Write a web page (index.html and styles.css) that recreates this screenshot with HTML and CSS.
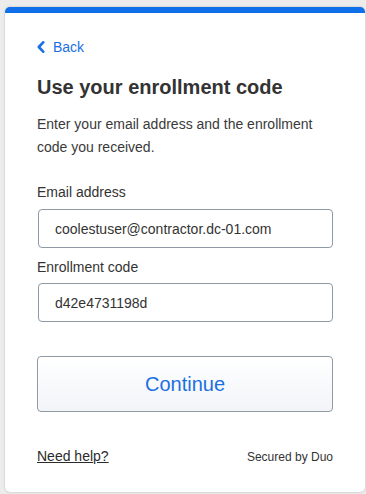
FILE: index.html
```html
<!DOCTYPE html>
<html lang="en">
<head>
<meta charset="utf-8">
<title>Use your enrollment code</title>
<link rel="stylesheet" href="styles.css">
</head>
<body>
<main class="card">
  <a class="back" href="#">
    <svg class="chev" width="8" height="12" viewBox="0 0 8 12" aria-hidden="true"><polyline points="6.2,1.3 1.8,6 6.2,10.7" fill="none" stroke="currentColor" stroke-width="2.6" stroke-linecap="round" stroke-linejoin="round"/></svg>
    <span>Back</span>
  </a>
  <h1 class="title">Use your enrollment code</h1>
  <p class="desc">Enter your email address and the enrollment code you received.</p>
  <label class="label label-first">Email address</label>
  <div class="input">coolestuser@contractor.dc-01.com</div>
  <label class="label label-second">Enrollment code</label>
  <div class="input">d42e4731198d</div>
  <button class="continue" type="button">Continue</button>
  <footer class="foot">
    <a class="help" href="#">Need help?</a>
    <span class="secured">Secured by Duo</span>
  </footer>
</main>
</body>
</html>
```
FILE: styles.css
```css
html, body {
  margin: 0;
  padding: 0;
}
body {
  background: #ececec;
  font-family: "Liberation Sans", Arial, sans-serif;
  color: #333;
  height: 494px;
  overflow: hidden;
}
.card {
  box-sizing: border-box;
  width: 360px;
  height: 485px;
  margin: 7px 0 0 5px;
  background: #fff;
  border-top: 6px solid #0f6fe8;
  border-radius: 5px;
  box-shadow: 0 0 2px rgba(0, 0, 0, 0.28);
  padding: 26px 32px 28px;
  display: flex;
  flex-direction: column;
}
.back {
  display: flex;
  align-items: center;
  gap: 8px;
  height: 16px;
  font-size: 14px;
  line-height: 16px;
  color: #1a6fe3;
  text-decoration: none;
  align-self: flex-start;
}
.chev {
  display: block;
  margin-top: -1px;
}
.title {
  margin: 20px 0 0;
  font-size: 20px;
  line-height: 24px;
  font-weight: bold;
  color: #333;
}
.desc {
  margin: 14px 0 0;
  font-size: 14px;
  line-height: 23px;
  color: #3a3a3a;
}
.label {
  display: block;
  font-size: 14px;
  line-height: 16px;
  color: #333;
}
.label-first {
  margin-top: 25px;
}
.label-second {
  margin-top: 11px;
}
.input {
  box-sizing: border-box;
  margin: 9px 0 0 1px;
  height: 39px;
  border: 1px solid #8e9aa6;
  border-radius: 4px;
  padding: 0 16px;
  display: flex;
  align-items: center;
  font-size: 14px;
  color: #333;
}
.label-second + .input {
  margin-top: 8px;
}
.continue {
  box-sizing: border-box;
  margin: 34px 0 0;
  height: 56px;
  width: 100%;
  border: 1px solid #8e9aa6;
  border-radius: 4px;
  background: linear-gradient(#ffffff, #f2f4f7);
  font-family: "Liberation Sans", Arial, sans-serif;
  font-size: 20px;
  color: #1a6fe3;
  padding: 0;
}
.foot {
  margin-top: 36px;
  display: flex;
  justify-content: space-between;
  align-items: baseline;
  height: 16px;
  line-height: 16px;
}
.help {
  font-size: 14px;
  color: #2b2b2b;
  text-decoration: underline;
}
.secured {
  font-size: 12px;
  color: #333;
}
```
